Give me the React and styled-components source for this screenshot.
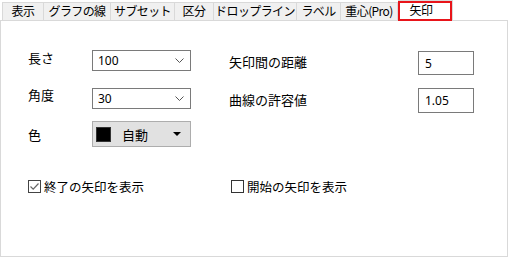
import React from "react";
import styled, { createGlobalStyle } from "styled-components";

const GlobalStyle = createGlobalStyle`
  body {
    margin: 0;
    background: #fff;
    font-family: "Noto Sans", "Noto Sans CJK JP", sans-serif;
    color: #000;
  }
`;

const Window = styled.div`
  width: 510px;
  height: 257px;
  background: #fff;
  overflow: hidden;
`;

const TabBar = styled.div`
  display: flex;
  align-items: flex-end;
  height: 20px;
  padding-left: 2px;
`;

const Tab = styled.div`
  position: relative;
  box-sizing: border-box;
  width: ${(p) => p.$w}px;
  height: ${(p) => (p.$active ? 21 : 18)}px;
  margin-bottom: ${(p) => (p.$active ? -1 : 0)}px;
  z-index: ${(p) => (p.$active ? 1 : 0)};
  background: ${(p) => (p.$active ? "#fff" : "#f0f0f0")};
  border-top: 1px solid #d9d9d9;
  border-right: 1px solid #d9d9d9;
  border-left: ${(p) => (p.$first ? "1px solid #d9d9d9" : "none")};
  font-family: "Noto Sans CJK JP", sans-serif;
  font-size: 12px;
  letter-spacing: -0.6px;
  line-height: ${(p) => (p.$active ? 18 : 16)}px;
  padding-right: ${(p) => (p.$active ? 8 : 0)}px;
  text-align: center;
  white-space: nowrap;

  &::after {
    content: "";
    display: ${(p) => (p.$active ? "block" : "none")};
    position: absolute;
    inset: 0;
    border: 2px solid #e8141a;
  }
`;

const Panel = styled.div`
  box-sizing: border-box;
  width: 508px;
  height: 237px;
  border: 1px solid #d9d9d9;
  padding: 29px 0 0 27px;
`;

const Form = styled.div`
  display: flex;
`;

const Column = styled.div`
  display: flex;
  flex-direction: column;
  width: ${(p) => p.$w}px;
  margin-left: ${(p) => p.$ml || 0}px;
  margin-top: ${(p) => p.$mt || 0}px;
`;

const Row = styled.div`
  display: flex;
  align-items: center;
  height: ${(p) => p.$h}px;
  margin-top: ${(p) => p.$mt || 0}px;
`;

const Label = styled.div`
  width: ${(p) => p.$w}px;
  flex: none;
  font-family: "Noto Sans CJK JP", sans-serif;
  font-size: 13px;
  margin-bottom: ${(p) => p.$lift || 0}px;
  white-space: nowrap;
`;

const Select = styled.div`
  box-sizing: border-box;
  width: 99px;
  height: 100%;
  border: 1px solid #7a7a7a;
  display: flex;
  align-items: center;
  justify-content: space-between;
  padding: 0 6px 0 5px;
  font-size: 12px;
`;

const ColorButton = styled.div`
  box-sizing: border-box;
  width: 99px;
  height: 100%;
  background: #e1e1e1;
  border: 1px solid #adadad;
  display: flex;
  align-items: center;
  padding: 0 9px 0 3px;
  font-family: "Noto Sans CJK JP", sans-serif;
  font-size: 13px;
`;

const Swatch = styled.span`
  box-sizing: border-box;
  width: 15px;
  height: 15px;
  background: #000;
  border: 1px solid #333;
  margin-right: 11px;
`;

const Grow = styled.span`
  flex: 1;
`;

const TextBox = styled.div`
  box-sizing: border-box;
  width: 56px;
  height: 100%;
  border: 1px solid #7a7a7a;
  display: flex;
  align-items: center;
  padding-left: 6px;
  font-size: 12px;
`;

const CheckRow = styled.div`
  display: flex;
  margin-top: 30px;
`;

const Check = styled.label`
  display: flex;
  align-items: center;
  width: ${(p) => p.$w}px;
  font-family: "Noto Sans CJK JP", sans-serif;
  font-size: 12.5px;
  white-space: nowrap;
`;

const Box = styled.span`
  box-sizing: border-box;
  width: 13px;
  height: 13px;
  border: 1px solid ${(p) => (p.$checked ? "#444" : "#333")};
  background: #fff;
  margin-right: 3px;
  display: flex;
  align-items: center;
  justify-content: center;
`;

const Chevron = () => (
  <svg width="9" height="5" viewBox="0 0 9 5">
    <path d="M0.5 0.5 L4.5 4.5 L8.5 0.5" fill="none" stroke="#555" strokeWidth="1" />
  </svg>
);

const Caret = () => (
  <svg width="8" height="4" viewBox="0 0 8 4">
    <path d="M0 0 H8 L4 4 Z" fill="#000" />
  </svg>
);

const Tick = () => (
  <svg width="11" height="11" viewBox="0 0 11 11">
    <path d="M1.5 5.5 L4.2 8.2 L9.5 2.5" fill="none" stroke="#666" strokeWidth="1.2" />
  </svg>
);

const tabs = [
  { label: "表示", w: 42 },
  { label: "グラフの線", w: 67 },
  { label: "サブセット", w: 64 },
  { label: "区分", w: 39 },
  { label: "ドロップライン", w: 83 },
  { label: "ラベル", w: 44 },
  { label: "重心(Pro)", w: 57 },
  { label: "矢印", w: 55, active: true },
];

export default function App() {
  return (
    <Window>
      <GlobalStyle />
      <TabBar>
        {tabs.map((t, i) => (
          <Tab key={t.label} $w={t.w} $first={i === 0} $active={t.active}>
            {t.label}
          </Tab>
        ))}
      </TabBar>
      <Panel>
        <Form>
          <Column $w={163}>
            <Row $h={21}>
              <Label $w={64} $lift={6}>長さ</Label>
              <Select>
                100
                <Chevron />
              </Select>
            </Row>
            <Row $h={21} $mt={17}>
              <Label $w={64} $lift={8}>角度</Label>
              <Select>
                30
                <Chevron />
              </Select>
            </Row>
            <Row $h={26} $mt={12}>
              <Label $w={64}>色</Label>
              <ColorButton>
                <Swatch />
                <Grow>自動</Grow>
                <Caret />
              </ColorButton>
            </Row>
          </Column>
          <Column $w={245} $ml={38} $mt={1}>
            <Row $h={24}>
              <Label $w={189} $lift={3}>矢印間の距離</Label>
              <TextBox>5</TextBox>
            </Row>
            <Row $h={25} $mt={13}>
              <Label $w={189} $lift={3}>曲線の許容値</Label>
              <TextBox>1.05</TextBox>
            </Row>
          </Column>
        </Form>
        <CheckRow>
          <Check $w={203}>
            <Box $checked>
              <Tick />
            </Box>
            終了の矢印を表示
          </Check>
          <Check $w={200}>
            <Box />
            開始の矢印を表示
          </Check>
        </CheckRow>
      </Panel>
    </Window>
  );
}
